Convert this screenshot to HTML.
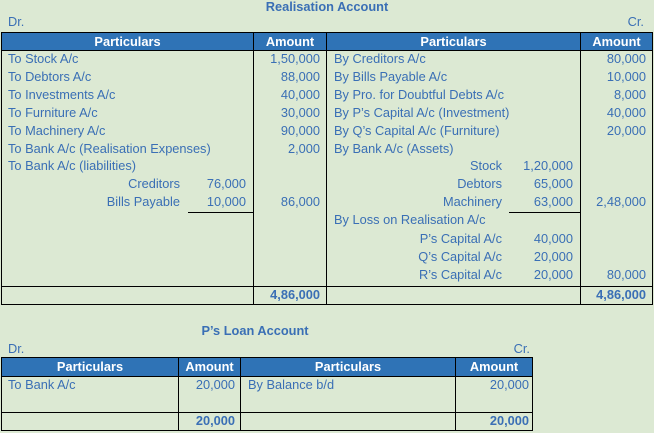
<!DOCTYPE html>
<html><head><style>
body{margin:0;width:654px;height:433px;background:#dce9d3;position:relative;overflow:hidden;font-family:"Liberation Sans",Arial,sans-serif;font-size:12.8px;color:#3a6fb5}
.a{position:absolute;white-space:nowrap;line-height:18px;height:18px}
.r{text-align:right}
.b{font-weight:bold}
.h{position:absolute;background:#2f73b6;color:#fff;font-weight:bold;text-align:center;line-height:18px;height:18px}
.l{position:absolute;background:#000}
.ti{position:absolute;font-weight:bold;color:#3a6fb5;font-size:12.8px;line-height:14px}
</style></head><body>
<div class="ti" style="left:0;width:654px;text-align:center;top:0px">Realisation Account</div>
<div class="a" style="left:8px;top:13px">Dr.</div>
<div class="a r" style="right:10px;top:13px">Cr.</div>
<div class="h" style="left:2px;top:33px;width:251px">Particulars</div>
<div class="h" style="left:254px;top:33px;width:72px">Amount</div>
<div class="h" style="left:327px;top:33px;width:253px">Particulars</div>
<div class="h" style="left:581px;top:33px;width:71px">Amount</div>
<div class="l" style="left:1px;top:32px;width:652px;height:1px"></div>
<div class="l" style="left:1px;top:50px;width:652px;height:1px"></div>
<div class="l" style="left:1px;top:286px;width:652px;height:1px"></div>
<div class="l" style="left:1px;top:304px;width:652px;height:1px"></div>
<div class="l" style="left:1px;top:32px;width:1px;height:273px"></div>
<div class="l" style="left:253px;top:32px;width:1px;height:273px"></div>
<div class="l" style="left:326px;top:32px;width:1px;height:273px"></div>
<div class="l" style="left:580px;top:32px;width:1px;height:273px"></div>
<div class="l" style="left:652px;top:32px;width:1px;height:273px"></div>
<div class="l" style="left:188px;top:212px;width:65px;height:1px"></div>
<div class="l" style="left:509px;top:212px;width:71px;height:1px"></div>
<div class="a" style="left:8px;top:50px">To Stock A/c</div>
<div class="a" style="left:8px;top:68px">To Debtors A/c</div>
<div class="a" style="left:8px;top:86px">To Investments A/c</div>
<div class="a" style="left:8px;top:104px">To Furniture A/c</div>
<div class="a" style="left:8px;top:122px">To Machinery A/c</div>
<div class="a" style="left:8px;top:140px">To Bank A/c (Realisation Expenses)</div>
<div class="a" style="left:8px;top:157px">To Bank A/c (liabilities)</div>
<div class="a r" style="right:474px;top:175px">Creditors</div>
<div class="a r" style="right:474px;top:193px">Bills Payable</div>
<div class="a r" style="right:408px;top:175px">76,000</div>
<div class="a r" style="right:408px;top:193px">10,000</div>
<div class="a r" style="right:334px;top:50px">1,50,000</div>
<div class="a r" style="right:334px;top:68px">88,000</div>
<div class="a r" style="right:334px;top:86px">40,000</div>
<div class="a r" style="right:334px;top:104px">30,000</div>
<div class="a r" style="right:334px;top:122px">90,000</div>
<div class="a r" style="right:334px;top:140px">2,000</div>
<div class="a r" style="right:334px;top:193px">86,000</div>
<div class="a r b" style="right:334px;top:286px">4,86,000</div>
<div class="a" style="left:334px;top:50px">By Creditors A/c</div>
<div class="a" style="left:334px;top:68px">By Bills Payable A/c</div>
<div class="a" style="left:334px;top:86px">By Pro. for Doubtful Debts A/c</div>
<div class="a" style="left:334px;top:104px">By P’s Capital A/c (Investment)</div>
<div class="a" style="left:334px;top:122px">By Q’s Capital A/c (Furniture)</div>
<div class="a" style="left:334px;top:140px">By Bank A/c (Assets)</div>
<div class="a r" style="right:152px;top:157px">Stock</div>
<div class="a r" style="right:152px;top:175px">Debtors</div>
<div class="a r" style="right:152px;top:193px">Machinery</div>
<div class="a r" style="right:81px;top:157px">1,20,000</div>
<div class="a r" style="right:81px;top:175px">65,000</div>
<div class="a r" style="right:81px;top:193px">63,000</div>
<div class="a" style="left:334px;top:211px">By Loss on Realisation A/c</div>
<div class="a r" style="right:152px;top:230px">P’s Capital A/c</div>
<div class="a r" style="right:152px;top:248px">Q’s Capital A/c</div>
<div class="a r" style="right:152px;top:266px">R’s Capital A/c</div>
<div class="a r" style="right:81px;top:230px">40,000</div>
<div class="a r" style="right:81px;top:248px">20,000</div>
<div class="a r" style="right:81px;top:266px">20,000</div>
<div class="a r" style="right:8px;top:50px">80,000</div>
<div class="a r" style="right:8px;top:68px">10,000</div>
<div class="a r" style="right:8px;top:86px">8,000</div>
<div class="a r" style="right:8px;top:104px">40,000</div>
<div class="a r" style="right:8px;top:122px">20,000</div>
<div class="a r" style="right:8px;top:193px">2,48,000</div>
<div class="a r" style="right:8px;top:266px">80,000</div>
<div class="a r b" style="right:8px;top:286px">4,86,000</div>
<div class="ti" style="left:0;width:510px;text-align:center;top:324px">P’s Loan Account</div>
<div class="a" style="left:8px;top:340px">Dr.</div>
<div class="a r" style="right:124px;top:340px">Cr.</div>
<div class="h" style="left:2px;top:358px;width:176px">Particulars</div>
<div class="h" style="left:179px;top:358px;width:61px">Amount</div>
<div class="h" style="left:241px;top:358px;width:214px">Particulars</div>
<div class="h" style="left:456px;top:358px;width:76px">Amount</div>
<div class="l" style="left:1px;top:357px;width:532px;height:1px"></div>
<div class="l" style="left:1px;top:376px;width:532px;height:1px"></div>
<div class="l" style="left:1px;top:412px;width:532px;height:1px"></div>
<div class="l" style="left:1px;top:430px;width:532px;height:1px"></div>
<div class="l" style="left:1px;top:357px;width:1px;height:74px"></div>
<div class="l" style="left:178px;top:357px;width:1px;height:74px"></div>
<div class="l" style="left:240px;top:357px;width:1px;height:74px"></div>
<div class="l" style="left:455px;top:357px;width:1px;height:74px"></div>
<div class="l" style="left:532px;top:357px;width:1px;height:74px"></div>
<div class="a" style="left:8px;top:376px">To Bank A/c</div>
<div class="a r" style="right:419px;top:376px">20,000</div>
<div class="a" style="left:248px;top:376px">By Balance b/d</div>
<div class="a r" style="right:125px;top:376px">20,000</div>
<div class="a r b" style="right:419px;top:412px">20,000</div>
<div class="a r b" style="right:125px;top:412px">20,000</div>
</body></html>
